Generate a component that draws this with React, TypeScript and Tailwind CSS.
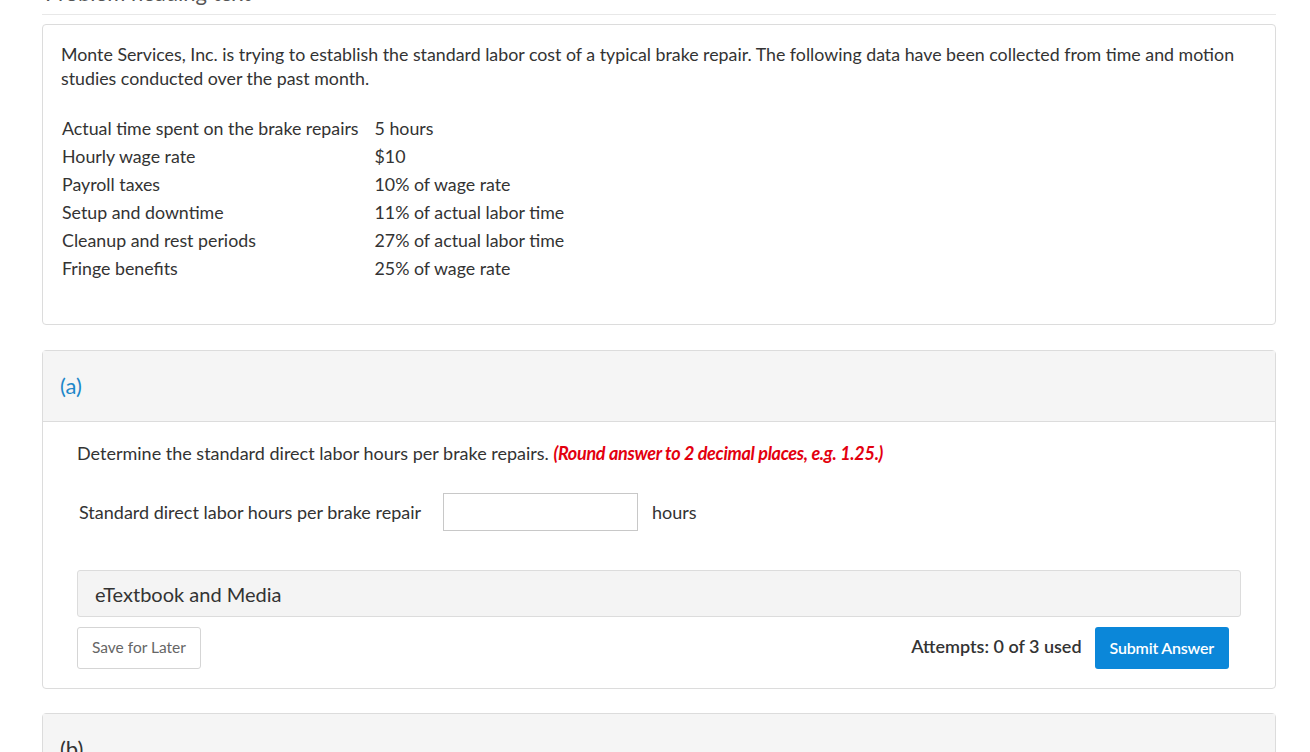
const rows: [string, string][] = [
  ["Actual time spent on the brake repairs", "5 hours"],
  ["Hourly wage rate", "$10"],
  ["Payroll taxes", "10% of wage rate"],
  ["Setup and downtime", "11% of actual labor time"],
  ["Cleanup and rest periods", "27% of actual labor time"],
  ["Fringe benefits", "25% of wage rate"],
];

export default function App() {
  return (
    <div
      className="h-[752px] overflow-hidden bg-white text-[#333]"
      style={{ fontFamily: "Lato, 'Liberation Sans', sans-serif" }}
    >
      <div className="-mt-[20px] ml-[42px] mr-[34px]">
        <div className="border-b border-[#e8e8e8] pb-[9px] pl-[3px] text-[22px] leading-[25px] text-[#555]">
          Problem heading text
        </div>

        <div className="mt-[9px] rounded border border-[#dcdcdc] px-[18px] pt-[17px] pb-[42px]">
          <p className="text-[17.8px] leading-[24px]">
            Monte Services, Inc. is trying to establish the standard labor cost of a typical brake repair. The
            following data have been collected from time and motion studies conducted over the past month.
          </p>
          <table className="mt-[24px] ml-[1px] text-[17.8px] leading-[28px]">
            <tbody>
              {rows.map(([label, value]) => (
                <tr key={label}>
                  <td className="pr-[16px]">{label}</td>
                  <td>{value}</td>
                </tr>
              ))}
            </tbody>
          </table>
        </div>

        <div className="mt-[25px] rounded border border-[#dcdcdc]">
          <div className="h-[71px] border-b border-[#dcdcdc] bg-[#f5f5f5] pl-[17px] pt-[20px] text-[22px] leading-[30px] text-[#1c87c9]">
            (a)
          </div>
          <div className="pl-[34px] pr-[34px] pt-[19px] pb-[19px]">
            <p className="text-[18px] leading-[24px]">
              Determine the standard direct labor hours per brake repairs.{" "}
              <span className="font-bold italic tracking-[-0.3px] text-[#e3000f]">
                (Round answer to 2 decimal places, e.g. 1.25.)
              </span>
            </p>
            <div className="mt-[28px] flex items-center">
              <span className="ml-[2px] text-[18px]">Standard direct labor hours per brake repair</span>
              <input
                className="ml-[22px] h-[38px] w-[195px] border border-[#c8c8c8] px-2 text-[17px] outline-none"
                type="text"
              />
              <span className="ml-[14px] text-[18px]">hours</span>
            </div>
            <div className="mt-[39px] flex h-[47px] items-center rounded-[3px] border border-[#dcdcdc] bg-[#f4f4f4] pl-[17px] text-[20px] text-[#333]">
              eTextbook and Media
            </div>
            <div className="mt-[10px] mr-[12px] flex items-center">
              <button className="h-[42px] rounded-[3px] border border-[#d5d5d5] bg-white px-[14px] text-[15.5px] text-[#666]">
                Save for Later
              </button>
              <div className="ml-auto flex items-center">
                <span className="-mt-[4px] text-[18px] font-semibold text-[#333]">Attempts: 0 of 3 used</span>
                <button className="ml-[13px] h-[42px] rounded-[3px] bg-[#0b87d9] px-[15px] text-[16px] font-semibold tracking-[-0.2px] text-white">
                  Submit Answer
                </button>
              </div>
            </div>
          </div>
        </div>

        <div className="mt-[24px] rounded border border-[#dcdcdc]">
          <div className="h-[71px] bg-[#f5f5f5] pl-[17px] pt-[20px] text-[22px] leading-[30px] text-[#333]">
            (b)
          </div>
        </div>
      </div>
    </div>
  );
}
